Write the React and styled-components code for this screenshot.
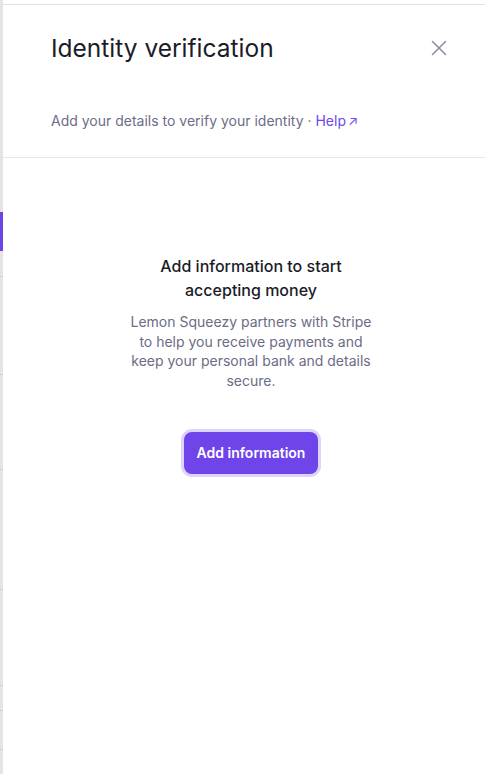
import styled, { createGlobalStyle } from "styled-components";
import { X } from "lucide-react";

// rows of the page that sits behind the drawer (heights in px)
const pageRows = [26, 98, 95, 120, 96, 25, 39];

export default () => {
  return (
    <>
      <GlobalStyle />
      <Screen>
        <PageEdge>
          <NavActive />
          { pageRows.map((h, i) => (
            <PageRow key={ i } style={ { height: h } } />
          )) }
        </PageEdge>

        <Drawer>
          <TopRule />
          <Header>
            <TitleRow>
              <Title>Identity verification</Title>
              <CloseButton aria-label="Close">
                <X size={ 26 } strokeWidth={ 1.4 } />
              </CloseButton>
            </TitleRow>
            <Subtitle>
              Add your details to verify your identity ·{ " " }
              <HelpLink href="#">Help<Arrow>↗</Arrow></HelpLink>
            </Subtitle>
          </Header>

          <Body>
            <Heading>Add information to start accepting money</Heading>
            <Text>
              Lemon Squeezy partners with Stripe to help you receive payments and
              keep your personal bank and details secure.
            </Text>
            <PrimaryButton>Add information</PrimaryButton>
          </Body>
        </Drawer>
      </Screen>
    </>
  )
};

const GlobalStyle = createGlobalStyle`
  html, body {
    margin: 0;
    padding: 0;
    background: #fff;
  }

  body {
    font-family: Inter, "Noto Sans", sans-serif;
    -webkit-font-smoothing: antialiased;
  }
`;

const Screen = styled.div`
  display: flex;
  width: 485px;
  height: 774px;
  overflow: hidden;
`;

const PageEdge = styled.div`
  width: 3px;
  flex-shrink: 0;
  display: flex;
  flex-direction: column;
  background: #e4e4e6;
`;

const NavActive = styled.div`
  margin-top: 212px;
  height: 39px;
  background: #6f44e6;
`;

const PageRow = styled.div`
  border-bottom: 1px solid #cfcfd3;
  box-sizing: border-box;
`;

const Drawer = styled.div`
  flex: 1;
  display: flex;
  flex-direction: column;
  background: #fff;
`;

const TopRule = styled.div`
  margin-top: 4px;
  height: 1px;
  background: #e3e3e6;
`;

const Header = styled.div`
  padding: 27px 33px 26px 48px;
  border-bottom: 1px solid #e8e8ec;
`;

const TitleRow = styled.div`
  display: flex;
  align-items: center;
  justify-content: space-between;
`;

const Title = styled.h2`
  margin: 0;
  font-size: 24.5px;
  line-height: 32px;
  font-weight: 400;
  color: #1c1c28;
`;

const CloseButton = styled.button`
  display: flex;
  align-items: center;
  justify-content: center;
  padding: 0;
  border: none;
  background: none;
  color: #8b8ba4;
  cursor: pointer;
`;

const Subtitle = styled.p`
  margin: 47px 0 0;
  font-size: 14px;
  line-height: 20px;
  color: #6c6c85;
`;

const HelpLink = styled.a`
  color: #7047eb;
  text-decoration: none;
`;

const Arrow = styled.span`
  font-size: 13px;
  margin-left: 2px;
`;

const Body = styled.div`
  display: flex;
  flex-direction: column;
  align-items: center;
  padding: 96px 34px 0 48px;
  text-align: center;
`;

const Heading = styled.h3`
  margin: 0;
  max-width: 210px;
  font-size: 16px;
  line-height: 24px;
  font-weight: 500;
  color: #1c1c28;
`;

const Text = styled.p`
  margin: 10px 0 0;
  max-width: 246px;
  font-size: 14px;
  line-height: 19.7px;
  color: #6c6c85;
`;

const PrimaryButton = styled.button`
  margin-top: 41px;
  height: 42px;
  padding: 0 13px;
  border: none;
  border-radius: 8px;
  background: #6f44e8;
  box-shadow: 0 0 0 3px #ddd4fb;
  color: #fff;
  font-family: inherit;
  font-size: 14px;
  font-weight: 600;
  cursor: pointer;
`;
